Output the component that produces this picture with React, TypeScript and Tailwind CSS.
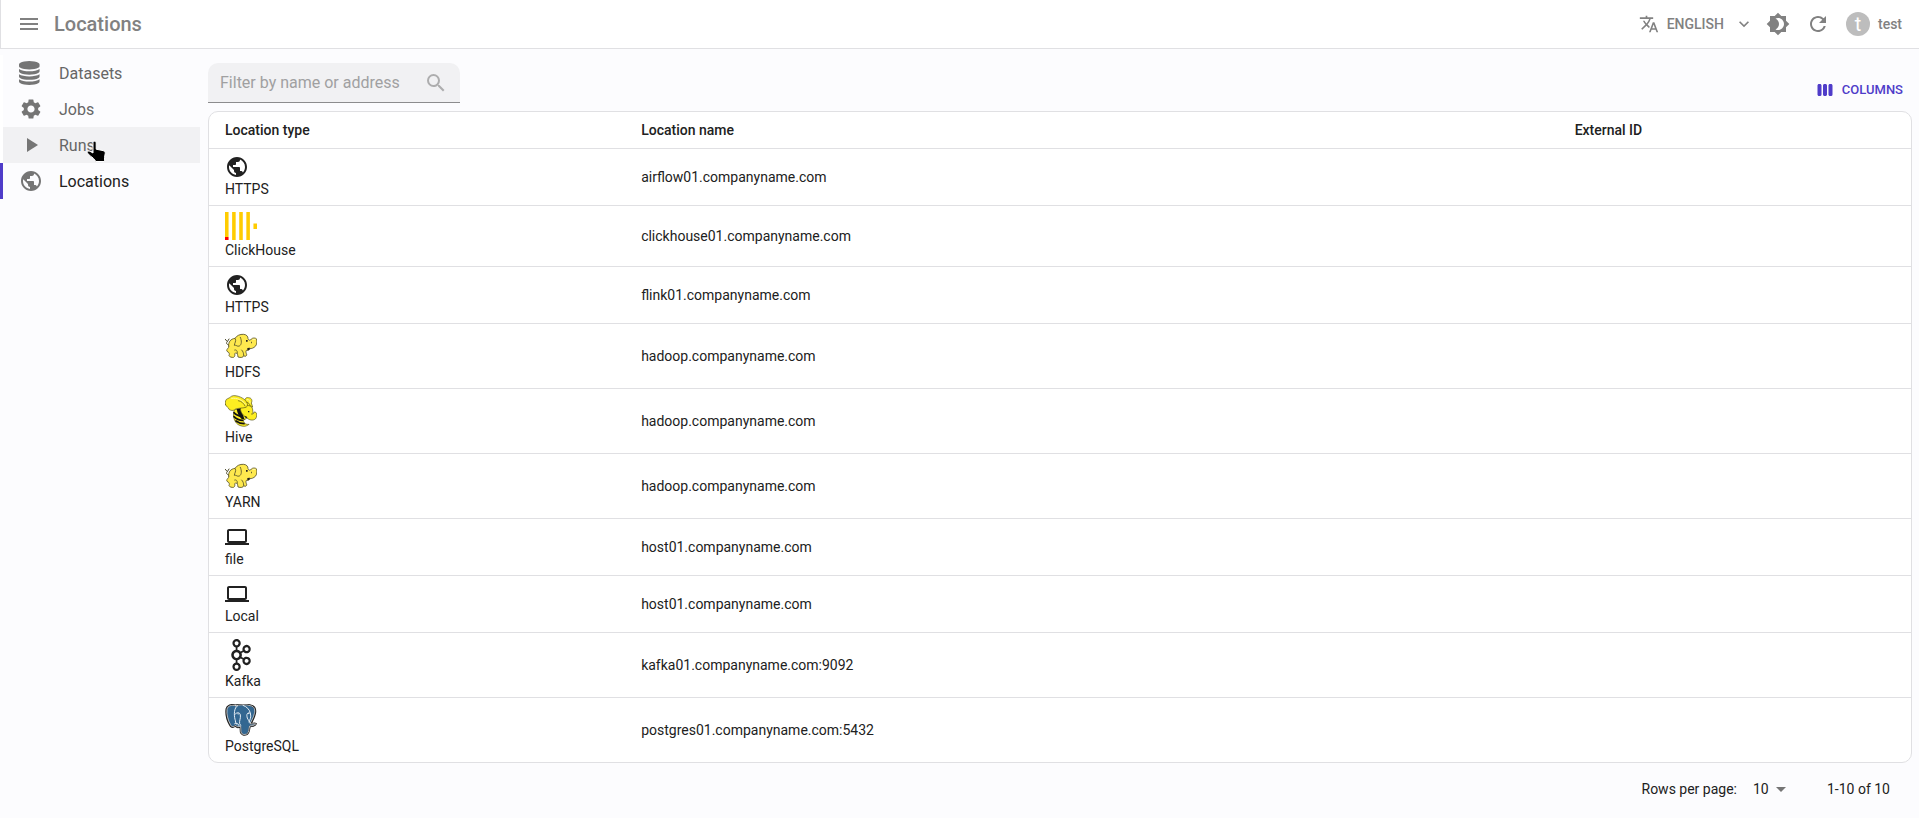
import type { ReactNode } from 'react'
import {
    MdBrightness4,
    MdArrowDropDown,
    MdComputer,
    MdExpandMore,
    MdMenu,
    MdPlayArrow,
    MdPublic,
    MdRefresh,
    MdSearch,
    MdSettings,
    MdTranslate,
    MdViewWeek,
} from 'react-icons/md'
import { SiApachekafka } from 'react-icons/si'

interface NavItemInterface{
    label: string;
    icon: ReactNode;
    active?: boolean;
    hovered?: boolean;
}

interface LocationInterface{
    type: string;
    name: string;
    icon: ReactNode;
}

function DatabaseIcon(){
    return(
        <svg viewBox="0 0 1536 1792" className="h-6" fill="currentColor" aria-hidden="true">
            <path d="M768 768q237 0 443-43t325-127v170q0 69-103 128t-280 93.5-385 34.5-385-34.5-280-93.5-103-128v-170q119 84 325 127t443 43zm0 768q237 0 443-43t325-127v170q0 69-103 128t-280 93.5-385 34.5-385-34.5-280-93.5-103-128v-170q119 84 325 127t443 43zm0-384q237 0 443-43t325-127v170q0 69-103 128t-280 93.5-385 34.5-385-34.5-280-93.5-103-128v-170q119 84 325 127t443 43zm0-1152q208 0 385 34.5t280 93.5 103 128v128q0 69-103 128t-280 93.5-385 34.5-385-34.5-280-93.5-103-128v-128q0-69 103-128t280-93.5 385-34.5z" />
        </svg>
    )
}

function ClickHouseIcon(){
    return(
        <svg viewBox="0 0 9 8" className="w-8" aria-hidden="true">
            <path fill="#f00" d="M0 7h1v1H0z" />
            <path fill="#fc0" d="M0 0h1v7H0zM2 0h1v8H2zM4 0h1v8H4zM6 0h1v8H6zM8 3.25h1v1.5H8z" />
        </svg>
    )
}

function HadoopIcon(){
    return(
        <svg viewBox="0 0 96 96" className="size-8" strokeLinecap="round" strokeLinejoin="round" aria-hidden="true">
            <path fill="none" stroke="#4d4a2a" strokeWidth="3" d="M11 44C5 44 2 39 6 36M1 28l6 7 5-8" />
            <path
                fill="#fee94e"
                stroke="#55502a"
                strokeWidth="2.5"
                d="M11 48C10 35 17 27 30 25C35 17 45 12 56 13C65 14 69 19 69 26C72 32 76 32 79 27C83 23 91 23 95 27C96 36 96 43 91 49C86 54 80 56 74 56C73 60 69 62 64 61C62 65 63 69 65 73C66 78 61 81 56 77C56 82 47 84 39 81C38 76 38 72 36 70C33 69 31 69 29 71C30 76 30 79 26 82C20 83 14 81 12 77C14 72 13 68 9 66C4 64 4 58 8 56C10 54 12 52 11 48Z"
            />
            <path fill="none" stroke="#55502a" strokeWidth="2.5" d="M31 26C35 33 28 40 28 46C35 44 36 51 43 48C51 44 50 31 46 22M29 60C34 58 38 63 37 70M50 60C54 64 56 69 56 76" />
            <path fill="none" stroke="#fff8b8" strokeWidth="3" d="M84 28h6" />
            <path fill="#222" d="M67 54l8-1-2 7-6 1zM63 30h5v5h-5zM79 35h2v5h-2z" />
        </svg>
    )
}

function HiveIcon(){
    return(
        <svg viewBox="0 0 96 96" className="size-8" strokeLinecap="round" strokeLinejoin="round" aria-hidden="true">
            <path fill="#fdee21" stroke="#55521a" strokeWidth="2" d="M59 23C58 12 63 6 70 8C80 8 83 17 79 24L83 36L70 35Z" />
            <path fill="#fdee21" stroke="#55521a" strokeWidth="2" d="M28 45C23 57 25 73 34 84C40 91 49 94 59 94C66 92 70 91 72 88C63 89 57 86 55 76L65 70L44 42Z" />
            <path fill="none" stroke="#111" strokeWidth="5" d="M27 53C33 60 42 63 51 65M27 65C34 72 43 76 53 76M33 78C40 83 48 86 57 86" />
            <path fill="#111" d="M35 42L47 40L59 74L49 71C41 63 37 54 35 42Z" />
            <path fill="#fdee21" stroke="#55521a" strokeWidth="2" d="M46 40C51 33 64 29 76 33C84 36 83 46 84 56C88 56 85 49 90 51C98 53 96 66 91 72C83 78 72 75 65 68C55 63 46 52 46 40Z" />
            <path fill="#fdee21" stroke="#55521a" strokeWidth="2" d="M1 29C0 21 2 12 8 11C15 9 17 3 25 2C38 1 57 9 64 20C69 26 69 34 63 37C51 40 41 39 32 42C25 49 16 46 12 43C11 36 3 35 1 29Z" />
            <path fill="none" stroke="#fff9a5" strokeWidth="3" d="M20 10C37 8 52 15 62 28M66 14C72 12 76 18 75 24" />
            <path fill="none" stroke="#55521a" strokeWidth="2" d="M40 17C50 19 56 25 60 33M66 22C70 22 73 26 76 33" />
            <path fill="#222" d="M69 48h4v4h-4zM80 55h2v4h-2zM58 62l8 3 1 5-5-2z" />
        </svg>
    )
}

function PostgresIcon(){
    return(
        <svg viewBox="0 0 96 96" className="size-8" strokeLinecap="round" strokeLinejoin="round" aria-hidden="true">
            <path
                fill="#336791"
                stroke="#222"
                strokeWidth="5"
                d="M31 4C42 1 66 0 77 4C91 6 93 20 90 30C87 43 80 54 78 59C84 59 90 57 93 59C91 65 82 67 75 67C72 75 74 86 66 91C58 95 49 93 47 84L46 68C39 71 33 69 31 65C24 72 18 71 14 62C7 49 2 30 4 15C6 4 19 0 31 4Z"
            />
            <path fill="none" stroke="#fff" strokeWidth="2" d="M31 5C42 2 66 1 76 5C89 7 91 19 88 29C85 42 78 53 75 59C82 61 88 58 92 60C86 65 80 65 74 66C71 74 73 86 65 90C58 93 50 92 48 84L47 66C40 70 34 68 32 64C24 70 19 69 16 61C9 49 4 30 6 16C8 5 20 2 31 5Z" />
            <path fill="none" stroke="#e6eef5" strokeWidth="3" d="M38 5C26 11 27 34 30 46C33 52 29 58 36 61M31 30C36 24 45 25 46 33C48 43 42 50 44 59L47 64M29 59C35 55 42 60 42 65M54 4C65 8 74 16 76 28C80 40 74 47 72 54M76 28C69 24 64 29 66 38C66 44 71 47 75 56" />
            <path fill="#fff" d="M37 28l5 1-3 3zM67 28l5-1-2 4z" />
        </svg>
    )
}

function PointerCursor(){
    return(
        <svg viewBox="0 0 20 24" className="pointer-events-none absolute left-[83px] top-[13px] z-10 w-5" aria-hidden="true">
            <path
                fill="#000"
                stroke="#fff"
                strokeWidth="1"
                strokeLinejoin="round"
                d="M7.5 1.5C9 .8 10.2 1.5 10.2 3V9.2L17 10.6C18.6 11 19.4 12 19.2 13.5L18.5 17.5L18.7 21.5H9.7C8.6 19 6.5 17.4 4.5 16.2L1.2 12.8C1 11.2 2.8 10.6 4 11.3L7 13V3C7 2.2 7 1.8 7.5 1.5Z"
            />
        </svg>
    )
}

const navItems: NavItemInterface[] = [
    { label: 'Datasets', icon: <DatabaseIcon /> },
    { label: 'Jobs', icon: <MdSettings className="size-6" /> },
    { label: 'Runs', icon: <MdPlayArrow className="size-6" />, hovered: true },
    { label: 'Locations', icon: <MdPublic className="size-6" />, active: true },
]

const locations: LocationInterface[] = [
    { type: 'HTTPS', name: 'airflow01.companyname.com', icon: <MdPublic className="size-6" /> },
    { type: 'ClickHouse', name: 'clickhouse01.companyname.com', icon: <ClickHouseIcon /> },
    { type: 'HTTPS', name: 'flink01.companyname.com', icon: <MdPublic className="size-6" /> },
    { type: 'HDFS', name: 'hadoop.companyname.com', icon: <HadoopIcon /> },
    { type: 'Hive', name: 'hadoop.companyname.com', icon: <HiveIcon /> },
    { type: 'YARN', name: 'hadoop.companyname.com', icon: <HadoopIcon /> },
    { type: 'file', name: 'host01.companyname.com', icon: <MdComputer className="size-6" /> },
    { type: 'Local', name: 'host01.companyname.com', icon: <MdComputer className="size-6" /> },
    { type: 'Kafka', name: 'kafka01.companyname.com:9092', icon: <SiApachekafka className="size-8" /> },
    { type: 'PostgreSQL', name: 'postgres01.companyname.com:5432', icon: <PostgresIcon /> },
]

function Header(){
    return(
        <header className="flex h-[49px] items-center border-b border-l border-[#e0e0e3] bg-white pl-4 pr-[17px] text-[#818181]">
            <button type="button" aria-label="Close menu" className="mr-[13px] cursor-pointer">
                <MdMenu className="size-6" />
            </button>
            <h1 className="flex-1 text-xl font-medium">Locations</h1>
            <button type="button" className="flex cursor-pointer items-center text-sm font-medium">
                <MdTranslate className="mr-2 size-5" />
                ENGLISH
                <MdExpandMore className="ml-[10px] size-5" />
            </button>
            <button type="button" aria-label="Toggle theme" className="ml-3 cursor-pointer">
                <MdBrightness4 className="size-6" />
            </button>
            <button type="button" aria-label="Refresh" className="ml-4 cursor-pointer">
                <MdRefresh className="size-6" />
            </button>
            <button type="button" className="ml-4 flex cursor-pointer items-center gap-2 text-sm font-medium">
                <span className="flex size-6 items-center justify-center rounded-full bg-[#bdbdbd] text-xl font-normal text-white">t</span>
                test
            </button>
        </header>
    )
}

function Sidebar(){
    return(
        <nav className="w-[200px] shrink-0 pt-[6px]">
            {navItems.map(({label, icon, active, hovered}) => (
                <a
                    key={label}
                    href={`#${label.toLowerCase()}`}
                    className={`${active ? 'border-[#4f3cc9] text-[#212121]' : 'border-white text-[#666666]'} ${hovered ? 'bg-[#f1f1f3]' : ''} relative flex h-9 items-center border-l-3 pl-4`}
                >
                    <span className="w-10 text-[#757575]">{icon}</span>
                    <span className="pt-[2px]">{label}</span>
                    {hovered && <PointerCursor />}
                </a>
            ))}
        </nav>
    )
}

function LocationsTable(){
    return(
        <div className="overflow-hidden rounded-[10px] border border-[#e0e0e3] bg-white">
            <table className="w-full table-fixed text-left text-sm">
                <thead>
                    <tr className="border-b border-[#e0e0e3]">
                        <th className="w-[24.45%] px-4 py-[6px] font-medium leading-6">Location type</th>
                        <th className="w-[54.85%] px-4 py-[6px] font-medium leading-6">Location name</th>
                        <th className="px-4 py-[6px] font-medium leading-6">External ID</th>
                    </tr>
                </thead>
                <tbody>
                    {locations.map(({type, name, icon}) => (
                        <tr key={type + name} className="border-b border-[#e0e0e3] last:border-b-0">
                            <td className="px-4 py-[6px]">
                                {icon}
                                <span className="block">{type}</span>
                            </td>
                            <td className="px-4 py-[6px]">{name}</td>
                            <td className="px-4 py-[6px]"></td>
                        </tr>
                    ))}
                </tbody>
            </table>
        </div>
    )
}

function Pagination(){
    return(
        <div className="flex h-[52px] items-center justify-end pr-[22px] text-sm">
            <label htmlFor="rows">Rows per page:</label>
            <div className="relative ml-4 mr-[34px]">
                <select id="rows" className="appearance-none rounded bg-transparent pr-6 outline-none">
                    <option>10</option>
                    <option>25</option>
                    <option>50</option>
                </select>
                <MdArrowDropDown className="pointer-events-none absolute -top-[2px] right-0 size-6 text-[#757575]" />
            </div>
            <p>1-10 of 10</p>
        </div>
    )
}

export default function App(){
    return(
        <div className="min-h-screen bg-[#fcfcfe] font-[Roboto,sans-serif] text-[#212121]">
            <Header />
            <div className="flex">
                <Sidebar />
                <main className="min-w-0 flex-1 pl-2 pr-[7px] pt-[14px]">
                    <div className="mb-2 flex items-end justify-between">
                        <div className="flex h-10 w-[252px] items-center rounded-t-[10px] border-b border-[#8c8c8e] bg-[#f1f1f3] px-3">
                            <input
                                type="text"
                                aria-label="Filter by name or address"
                                placeholder="Filter by name or address"
                                className="min-w-0 flex-1 bg-transparent outline-none placeholder:text-[#a0a0a1]"
                            />
                            <MdSearch className="size-6 text-[#adadae]" />
                        </div>
                        <button type="button" className="flex h-[26px] cursor-pointer items-center gap-2 pr-[9px] text-[13px] font-medium text-[#4f3cc9]">
                            <MdViewWeek className="size-[18px]" />
                            COLUMNS
                        </button>
                    </div>
                    <LocationsTable />
                    <Pagination />
                </main>
            </div>
        </div>
    )
}
